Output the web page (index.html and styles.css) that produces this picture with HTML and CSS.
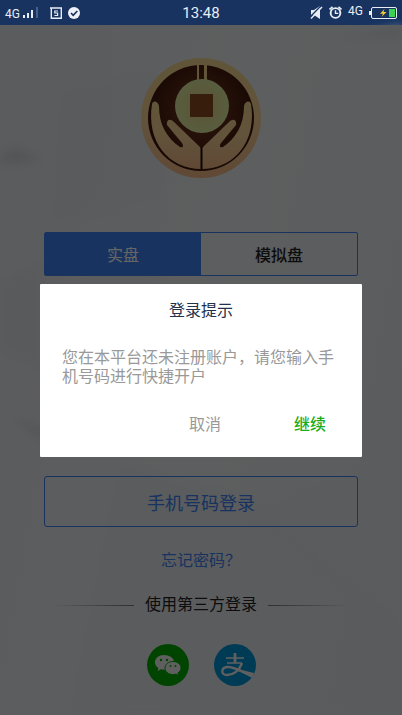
FILE: index.html
```html
<!DOCTYPE html>
<html lang="zh-CN">
<head>
  <meta charset="UTF-8">
  <meta name="viewport" content="width=device-width, initial-scale=1.0">
  <title>登录</title>
  <link rel="stylesheet" href="styles.css">
</head>
<body>

  <header class="status-bar">
    <div class="status-left">
      <span class="network">4G</span>
      <svg class="signal" width="18" height="12" viewBox="0 0 18 12">
        <path d="M1 8h2v3H1zM5 6h2v5H5zM9 3h2v8H9z" fill="#e8edf5"/>
        <path d="M14 0h2v11h-2z" fill="#45608a"/>
      </svg>
      <svg class="app-icon" width="12" height="12" viewBox="0 0 12 12" fill="none" stroke="#e8edf5">
        <path d="M0 1h11.300v10.300H1.300V1" stroke-width="1.400"/>
        <path d="M8 4H4.800v2h2.800v2.500H4.400" stroke-width="1.200"/>
      </svg>
      <svg width="12" height="12" viewBox="0 0 12 12">
        <circle cx="6" cy="6" r="6" fill="#eef2f8"/>
        <path d="M3 6l2.200 2.300L9.300 4" fill="none" stroke="#18335f" stroke-width="1.700"/>
      </svg>
    </div>
    <time class="clock">13:48</time>
    <div class="status-right">
      <svg width="13" height="13" viewBox="0 0 13 13">
        <path d="M1 4h3l6-4v13L4 9H1z" fill="#e8edf5"/>
        <path d="M0 11L11 0" stroke="#18335f" stroke-width="1.500"/>
        <path d="M1 12.500L12 1" stroke="#e8edf5" stroke-width="1.500"/>
      </svg>
      <svg width="13" height="13" viewBox="0 0 13 13" fill="none">
        <circle cx="6.500" cy="7" r="5.800" fill="#e8edf5"/>
        <path d="M0.500 3.500L3.500 .8M12.500 3.500L9.500 .8" stroke="#e8edf5" stroke-width="1.600"/>
        <circle cx="6.500" cy="7" r="3.900" fill="#18335f"/>
        <path d="M6.500 4.300V7.400H9.300" stroke="#e8edf5" stroke-width="1.400"/>
      </svg>
      <span class="network network-sim">4G</span>
      <svg width="28" height="12" viewBox="0 0 28 12">
        <rect x="2.500" y=".5" width="25" height="11" rx="1.500" fill="none" stroke="#e8edf5"/>
        <path d="M0 4h2v4H0z" fill="#e8edf5"/>
        <path d="M20 2h6v8h-6z" fill="#39d353"/>
        <path d="M15.500 2L11 6.700h3L12.500 10l5-5h-3z" fill="#f4cb2c"/>
      </svg>
    </div>
  </header>

  <main class="screen">
    <svg class="backdrop" viewBox="0 0 402 690" preserveAspectRatio="none">
      <path d="M60 65L190 45 160 170 50 200z" fill="#d5dade" opacity=".2"/>
      <path d="M0 130L14 122 42 134 16 140 0 137z" fill="#c2c9ce" opacity=".6"/>
      <path d="M340 14L402 0V12z" fill="#c5ced6" opacity=".5"/>
      <path d="M0 260L45 230V350L0 325z" fill="#d6dbdf" opacity=".4"/>
      <path d="M12 393L45 402V420z" fill="#c8ced3" opacity=".6"/>
      <path d="M120 440L260 480 402 600V690H70z" fill="#d8dfe4" opacity=".3"/>
      <path d="M240 490L402 440V600z" fill="#d9e1e5" opacity=".3"/>
    </svg>

    <div class="login">
      <svg class="logo" viewBox="0 0 120 120">
        <defs>
          <linearGradient id="gold" x1="0" y1="0" x2="0" y2="1">
            <stop offset="0" stop-color="#f0d58c"/>
            <stop offset=".5" stop-color="#f5d095"/>
            <stop offset="1" stop-color="#efb585"/>
          </linearGradient>
          <radialGradient id="brown" cx=".5" cy=".42" r=".5">
            <stop offset="0" stop-color="#7c3f20"/>
            <stop offset="1" stop-color="#3a140a"/>
          </radialGradient>
          <radialGradient id="coin">
            <stop offset="0" stop-color="#e6cc84"/>
            <stop offset="1" stop-color="#dcea9e"/>
          </radialGradient>
        </defs>
        <circle cx="60" cy="60" r="60" fill="url(#gold)"/>
        <circle cx="60" cy="60" r="53" fill="url(#brown)"/>
        <path d="M56 6h2v20h-2zM63 6h3v20h-3z" fill="#f0d58c"/>
        <circle cx="61" cy="48" r="27" fill="url(#coin)"/>
        <path d="M49 36h23v23H49z" fill="#8b4a1d"/>
        <g id="hand">
          <path d="M11 46C12 42 17 43 18 48C18 67 26 80 39 89C42 90 43 88 41 85L26 67C25 62 29 60 33 64L60 90V111C28 111 5 84 11 46z" fill="url(#gold)"/>
        </g>
        <use href="#hand" transform="matrix(-1 0 0 1 121 0)"/>
        <path d="M60.500 89v22" stroke="#220a05" stroke-width="2"/>
      </svg>

      <div class="tabs">
        <button type="button" class="tab active">实盘</button>
        <button type="button" class="tab">模拟盘</button>
      </div>

      <button type="button" class="phone-login">手机号码登录</button>
      <a href="#" class="forgot">忘记密码？</a>

      <div class="divider">使用第三方登录</div>

      <div class="socials">
        <button type="button" class="social" aria-label="微信登录">
          <svg viewBox="0 0 42 42">
            <circle cx="21" cy="21" r="21" fill="#00aa00"/>
            <path d="M17 11c-5.200 0-9 3.200-9 7.300 0 2.500 1.300 4.400 3.400 5.800l-.8 2.900 3.300-1.700c1.200.3 2.200.4 3.400.4C24 25.700 27 22 27 18.300 27 14 22.500 11 17 11z" fill="#eee"/>
            <path d="M26 17.500c-4.600 0-8 3-8 6.500s3.400 6.600 8 6.600c1 0 2-.2 2.900-.5l2.600 1.500-.7-2.500c2-1.300 3.200-3.100 3.200-5.100 0-3.500-3.400-6.500-8-6.500z" fill="#eee" stroke="#00aa00"/>
            <g fill="#00aa00">
              <circle cx="14" cy="16" r="1.200"/><circle cx="20" cy="16" r="1.200"/>
              <circle cx="23.500" cy="22" r="1"/><circle cx="28.500" cy="22" r="1"/>
            </g>
          </svg>
        </button>
        <button type="button" class="social" aria-label="支付宝登录">
          <svg viewBox="0 0 42 42">
            <circle cx="21" cy="21" r="21" fill="#0093d8"/>
            <g fill="none" stroke="#eee">
              <path d="M12 14h18M13 19h15" stroke-width="1.600"/>
              <path d="M21 9v10" stroke-width="2.800"/>
              <path d="M28 19C25 27 19 31 13 31C6 31 7 23 14 23C21 23 29 28 38 32" stroke-width="2.400"/>
            </g>
            <path d="M26 25.500L40 29 38 34C33 31 29 29 24 27z" fill="#eee"/>
          </svg>
        </button>
      </div>
    </div>

    <div class="overlay">
      <section class="dialog" role="dialog" aria-modal="true" aria-labelledby="dialog-title">
        <h2 id="dialog-title">登录提示</h2>
        <p>您在本平台还未注册账户，请您输入手机号码进行快捷开户</p>
        <div class="dialog-actions">
          <button type="button" class="cancel">取消</button>
          <button type="button" class="confirm">继续</button>
        </div>
      </section>
    </div>
  </main>

</body>
</html>
```
FILE: styles.css
```css
* {
  margin: 0;
  padding: 0;
  box-sizing: border-box;
}

body {
  display: flex;
  flex-direction: column;
  min-height: 100vh;
  font-family: Roboto, "Noto Sans CJK SC", sans-serif;
  font-size: 16px;
  color: #222;
}

button {
  border: 0;
  background: none;
  font: inherit;
  color: inherit;
  cursor: pointer;
}

svg {
  display: block;
}

/* Status bar */
.status-bar {
  display: grid;
  grid-template-columns: 1fr auto 1fr;
  align-items: center;
  height: 25px;
  padding: 0 5px;
  background: #18335f;
  color: #e8edf5;
}

.status-left,
.status-right {
  display: flex;
  align-items: center;
  gap: 6px;
}

.status-right {
  justify-content: flex-end;
}

.network {
  font-size: 12px;
  line-height: 12px;
}

.status-left .network {
  margin-right: -4px;
  padding-top: 2px;
}

.signal {
  margin-right: 4px;
}

.network-sim {
  padding-bottom: 4px;
}

.clock {
  font-size: 15px;
}

/* Login page */
.screen {
  position: relative;
  flex: 1;
  background: linear-gradient(100deg, #e2e5e8, #e9ebed 50%, #e2e6e9);
}

.backdrop {
  position: absolute;
  width: 100%;
  height: 100%;
  filter: blur(4px);
}

.login {
  position: relative;
  display: flex;
  flex-direction: column;
  align-items: center;
  padding: 33px 44px 29px;
}

.logo {
  width: 120px;
  height: 120px;
  margin-bottom: 54px;
}

.tabs {
  display: flex;
  width: 100%;
  height: 44px;
  margin-bottom: 200px;
  border: 1px solid #3c80ee;
  border-radius: 2px;
}

.tab {
  flex: 1;
  font-weight: 500;
}

.tab.active {
  background: #3c80ee;
  color: #fff;
  font-weight: 400;
}

.phone-login {
  width: 100%;
  height: 51px;
  border: 1px solid #3c80ee;
  border-radius: 3px;
  font-size: 18px;
  color: #3c80ee;
}

.forgot {
  margin: 22px 0 20px;
  line-height: 24px;
  color: #3c80ee;
  text-decoration: none;
}

.divider {
  display: flex;
  align-items: center;
  width: 100%;
  gap: 11px;
  padding: 0 8px;
  line-height: 24px;
}

.divider::before,
.divider::after {
  content: "";
  flex: 1;
  height: 1px;
  background: linear-gradient(to right, transparent, #777);
}

.divider::after {
  background: linear-gradient(to left, transparent, #777);
}

.socials {
  display: flex;
  gap: 25px;
  margin-top: 27px;
}

.social {
  width: 42px;
  height: 42px;
}

/* Dialog */
.overlay {
  position: absolute;
  inset: 0;
  display: flex;
  align-items: center;
  justify-content: center;
  padding: 0 40px;
  background: rgba(0, 0, 0, 0.6);
}

.dialog {
  width: 100%;
  padding: 15px 22px 20px;
  border-radius: 1px;
  background: #fff;
}

.dialog h2 {
  font-size: 16px;
  font-weight: 400;
  line-height: 24px;
  text-align: center;
  color: #25304a;
}

.dialog p {
  margin: 25px 0 27px;
  line-height: 19px;
  color: #999;
}

.dialog-actions {
  display: flex;
  justify-content: flex-end;
  gap: 73px;
  padding-right: 14px;
  line-height: 24px;
}

.cancel {
  color: #999;
}

.confirm {
  font-weight: 500;
  color: #1aad19;
}
```
